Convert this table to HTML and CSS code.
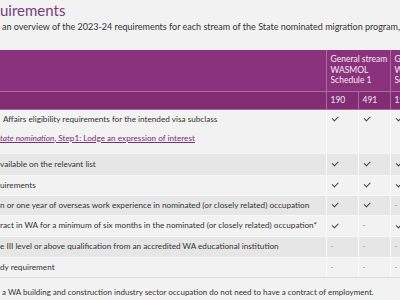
FILE: index.html
```html
<!DOCTYPE html>
<html lang="en">
<head>
<meta charset="utf-8">
<title>Requirements</title>
<link rel="stylesheet" href="styles.css">
</head>
<body>
<div class="page">
  <h1 class="title">uirements</h1>
  <p class="intro">an overview of the 2023-24 requirements for each stream of the State nominated migration program, for each of the visa subclasses.</p>
  <table class="req">
    <colgroup>
      <col class="w-req">
      <col class="w-num">
      <col class="w-num">
      <col class="w-num">
      <col class="w-num">
    </colgroup>
    <thead>
      <tr class="head1">
        <th></th>
        <th colspan="2">General stream<br>WASMOL<br>Schedule 1</th>
        <th colspan="2">General stream<br>WASMOL<br>Schedule 2</th>
      </tr>
      <tr class="head2">
        <th></th>
        <th>190</th>
        <th>491</th>
        <th>190</th>
        <th>491</th>
      </tr>
    </thead>
    <tbody>
      <tr class="r-tall">
        <td class="c-req"><span class="lead">Affairs eligibility requirements for the intended visa subclass</span><a class="link" href="#"><em>tate nomination</em>, Step1: Lodge an expression of interest</a></td>
        <td><span class="ck"></span></td>
        <td><span class="ck"></span></td>
        <td><span class="ck"></span></td>
        <td><span class="ck"></span></td>
      </tr>
      <tr class="alt r22">
        <td class="c-req">vailable on the relevant list</td>
        <td><span class="ck"></span></td>
        <td><span class="ck"></span></td>
        <td><span class="ck"></span></td>
        <td><span class="ck"></span></td>
      </tr>
      <tr>
        <td class="c-req">uirements</td>
        <td><span class="ck"></span></td>
        <td><span class="ck"></span></td>
        <td><span class="ck"></span></td>
        <td><span class="ck"></span></td>
      </tr>
      <tr class="alt">
        <td class="c-req">n or one year of overseas work experience in nominated (or closely related) occupation</td>
        <td><span class="ck"></span></td>
        <td><span class="ck"></span></td>
        <td><span class="dash">-</span></td>
        <td><span class="dash">-</span></td>
      </tr>
      <tr class="r21">
        <td class="c-req">ract in WA for a minimum of six months in the nominated (or closely related) occupation*</td>
        <td><span class="ck"></span></td>
        <td><span class="dash">-</span></td>
        <td><span class="ck"></span></td>
        <td><span class="dash">-</span></td>
      </tr>
      <tr class="alt r21">
        <td class="c-req">e III level or above qualification from an accredited WA educational institution</td>
        <td><span class="dash">-</span></td>
        <td><span class="dash">-</span></td>
        <td><span class="dash">-</span></td>
        <td><span class="dash">-</span></td>
      </tr>
      <tr>
        <td class="c-req">dy requirement</td>
        <td><span class="dash">-</span></td>
        <td><span class="dash">-</span></td>
        <td><span class="dash">-</span></td>
        <td><span class="dash">-</span></td>
      </tr>
    </tbody>
  </table>
  <p class="note">a WA building and construction industry sector occupation do not need to have a contract of employment.</p>
</div>
</body>
</html>
```
FILE: styles.css
```css
html, body {
  margin: 0;
  padding: 0;
  background: #f2f2f2;
  overflow: hidden;
}
body {
  width: 400px;
  height: 300px;
  font-family: "Lato", "Noto Sans", sans-serif;
  color: #3a3a3a;
}
.page {
  width: 460px;
}
.title {
  margin: 0;
  font-size: 15px;
  line-height: 20px;
  height: 20px;
  font-weight: 400;
  color: #7b3b7b;
  white-space: nowrap;
}
.intro {
  margin: 1px 0 0 2px;
  font-size: 9px;
  line-height: 12px;
  white-space: nowrap;
  color: #333;
}
.req {
  margin-top: 17px;
  border-collapse: collapse;
  table-layout: fixed;
  width: 454px;
  font-size: 8.2px;
  line-height: 11px;
}
.w-req { width: 326px; }
.w-num { width: 32px; }
.req th {
  background: #8b327d;
  color: #f4e9f2;
  font-weight: 400;
  font-size: 8.5px;
  text-align: left;
  vertical-align: top;
  white-space: nowrap;
  border-right: 1px solid #a86a9f;
  border-bottom: 1px solid #a86a9f;
  box-sizing: border-box;
}
.head1 th {
  height: 41px;
  padding: 4px 4px 0 4px;
  line-height: 10.7px;
}
.head2 th {
  background: #812c73;
  height: 18px;
  padding: 3px 4px 0 4px;
  line-height: 11px;
}
.req td {
  background: #f2f2f2;
  border-right: 1px solid #fbfbfb;
  border-bottom: 1px solid #f8f8f8;
  height: 20px;
  padding: 0 4px;
  vertical-align: middle;
  white-space: nowrap;
  overflow: hidden;
  box-sizing: border-box;
}
.req td.c-req {
  padding-left: 0;
  color: #333;
}
.req tr.alt td {
  background: #e6e6e6;
}
.req tr.r22 td { height: 22px; }
.req tr.r21 td { height: 21px; }
.req tbody tr:last-child td {
  border-bottom: 1px solid #dcdcdc;
}
.req tr.r-tall td {
  height: 44px;
  vertical-align: top;
  padding-top: 4px;
}
.lead {
  display: block;
  padding-left: 3px;
}
.link {
  display: block;
  margin-top: 8px;
  color: #7a2d70;
  text-decoration: underline;
}
.ck {
  display: inline-block;
  width: 5px;
  height: 2.5px;
  border-left: 1px solid #444;
  border-bottom: 1px solid #444;
  transform: rotate(-45deg);
  margin-left: 1px;
  position: relative;
  top: -2px;
}
.dash {
  color: #888;
  font-size: 8px;
}
.note {
  margin: 8px 0 0 2px;
  font-size: 8px;
  line-height: 12px;
  white-space: nowrap;
  color: #333;
}
```
